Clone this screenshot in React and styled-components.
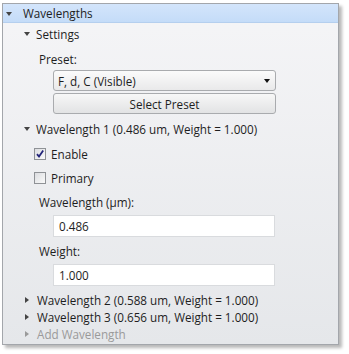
import React from 'react';
import styled, { createGlobalStyle } from 'styled-components';

const GlobalStyle = createGlobalStyle`
  body {
    margin: 0;
    background: #ffffff;
    font-family: "Open Sans", "Noto Sans", sans-serif;
  }
`;

const Page = styled.div`
  width: 349px;
  height: 354px;
  padding: 3px 0 0 2px;
  box-sizing: border-box;
`;

const Panel = styled.div`
  width: 337px;
  height: 342px;
  box-sizing: border-box;
  border: 1px solid #a3a6ab;
  background: linear-gradient(#f5f5f7, #e5e7ea);
  box-shadow: 3px 3px 3px rgba(0, 0, 0, 0.28);
  font-size: 11.7px;
  color: #1e1e1e;
  overflow: hidden;
`;

const Header = styled.div`
  display: flex;
  align-items: center;
  height: 18px;
  background: linear-gradient(#d3e5fb, #c4dcf8);
  border-bottom: 1px solid #b5cfee;
  padding-left: 3px;
`;

const Row = styled.div`
  display: flex;
  align-items: center;
  height: 17px;
  padding-left: ${(p) => p.indent}px;
  color: ${(p) => (p.muted ? '#9a9a9a' : '#1e1e1e')};
`;

const Expanded = styled.span`
  width: 0;
  height: 0;
  border-left: 3.5px solid transparent;
  border-right: 3.5px solid transparent;
  border-top: 4px solid #444;
  margin-right: ${(p) => p.gap || 8}px;
  margin-top: 1px;
`;

const Collapsed = styled.span`
  width: 0;
  height: 0;
  border-top: 3.5px solid transparent;
  border-bottom: 3.5px solid transparent;
  border-left: 4px solid ${(p) => (p.muted ? '#9a9a9a' : '#444')};
  margin: 0 8px 0 1px;
`;

const Label = styled.div`
  padding-left: 36px;
  height: 17px;
  line-height: 17px;
  margin-top: ${(p) => p.top}px;
`;

const Combo = styled.div`
  display: flex;
  align-items: center;
  justify-content: space-between;
  margin: 2px 0 0 50px;
  width: 223px;
  height: 21px;
  box-sizing: border-box;
  padding: 0 5px 0 4px;
  border: 1px solid #a9abae;
  border-radius: 3px;
  background: linear-gradient(#fbfbfb, #e9e9ea);
`;

const ComboArrow = styled.span`
  width: 0;
  height: 0;
  border-left: 3.5px solid transparent;
  border-right: 3.5px solid transparent;
  border-top: 4px solid #111;
`;

const Button = styled.div`
  display: flex;
  align-items: center;
  justify-content: center;
  margin: 2px 0 0 50px;
  width: 223px;
  height: 21px;
  box-sizing: border-box;
  border: 1px solid #a9abae;
  border-radius: 3px;
  background: linear-gradient(#f7f7f7, #e2e3e4);
`;

const CheckRow = styled.div`
  display: flex;
  align-items: center;
  height: 17px;
  padding-left: 31px;
  margin-top: ${(p) => p.top}px;
`;

const Box = styled.span`
  display: flex;
  align-items: center;
  justify-content: center;
  width: 12px;
  height: 12px;
  box-sizing: border-box;
  border: 1px solid #8f9296;
  background: linear-gradient(135deg, #dcdde0, #fafafa);
  margin-right: 5px;
`;

const Input = styled.div`
  display: flex;
  align-items: center;
  margin: ${(p) => p.top}px 0 0 50px;
  width: 222px;
  height: 22px;
  box-sizing: border-box;
  padding-left: 5px;
  border: 1px solid #d9dbde;
  background: #ffffff;
`;

const Spacer = styled.div`
  height: ${(p) => p.h}px;
`;

const Check = () => (
  <svg width="10" height="10" viewBox="0 0 10 10">
    <path d="M2 5.2 L4 7.6 L8.2 1.6" fill="none" stroke="#23257a" strokeWidth="1.8" />
  </svg>
);

export default function App() {
  return (
    <>
      <GlobalStyle />
      <Page>
        <Panel>
          <Header>
            <Expanded gap={11} />
            Wavelengths
          </Header>
          <Spacer h={2} />
          <Row indent={21}>
            <Expanded gap={6} />
            Settings
          </Row>
          <Label top={9}>Preset:</Label>
          <Combo>
            F, d, C (Visible)
            <ComboArrow />
          </Combo>
          <Button>Select Preset</Button>
          <Spacer h={6} />
          <Row indent={21}>
            <Expanded gap={6} />
            Wavelength 1 (0.486 um, Weight = 1.000)
          </Row>
          <CheckRow top={8}>
            <Box>
              <Check />
            </Box>
            Enable
          </CheckRow>
          <CheckRow top={7}>
            <Box />
            Primary
          </CheckRow>
          <Label top={8}>Wavelength (µm):</Label>
          <Input top={4}>0.486</Input>
          <Label top={6}>Weight:</Label>
          <Input top={4}>1.000</Input>
          <Spacer h={5} />
          <Row indent={21}>
            <Collapsed />
            Wavelength 2 (0.588 um, Weight = 1.000)
          </Row>
          <Row indent={21}>
            <Collapsed />
            Wavelength 3 (0.656 um, Weight = 1.000)
          </Row>
          <Row indent={21} muted>
            <Collapsed muted />
            Add Wavelength
          </Row>
        </Panel>
      </Page>
    </>
  );
}
